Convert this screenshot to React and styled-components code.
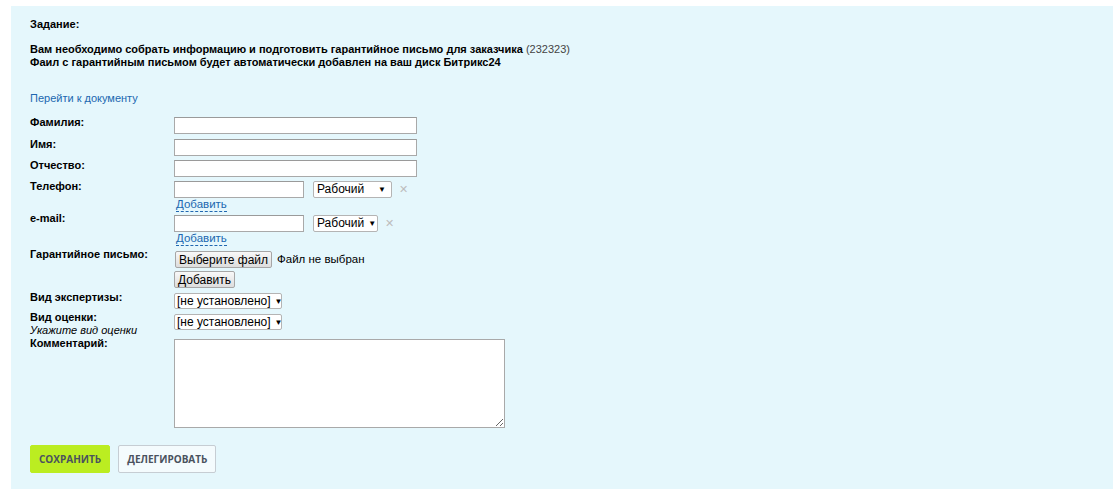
import React from "react";
import styled, { createGlobalStyle } from "styled-components";

const Global = createGlobalStyle`
  body {
    margin: 0;
    padding: 6px 0 0 11px;
    background: #fff;
    font-family: "Liberation Sans", Arial, sans-serif;
  }
`;

const Panel = styled.div`
  background: #e5f7fc;
  padding: 12px 19px 16px;
  font-size: 11px;
  line-height: 13px;
  color: #000;
`;

const Title = styled.div`
  font-weight: bold;
  margin-bottom: 12px;
`;

const Task = styled.div`
  font-weight: bold;
  span {
    font-weight: normal;
    color: #444;
  }
`;

const DocLink = styled.a`
  display: block;
  margin-top: 23px;
  margin-bottom: 11px;
  color: #2067b0;
  text-decoration: none;
`;

const Row = styled.div`
  display: flex;
  align-items: flex-start;
  margin-bottom: ${(p) => p.gap || 0}px;
`;

const Label = styled.div`
  width: 144px;
  flex-shrink: 0;
  font-weight: bold;
  line-height: 13px;
  em {
    display: block;
    font-weight: normal;
    line-height: 12px;
  }
`;

const Field = styled.div`
  display: flex;
  flex-direction: column;
  align-items: flex-start;
  margin-top: ${(p) => p.top || 0}px;
`;

const Line = styled.div`
  display: flex;
  align-items: center;
`;

const Input = styled.input`
  box-sizing: border-box;
  width: ${(p) => p.w}px;
  height: 17px;
  margin: 0;
  padding: 0 3px;
  border: 1px solid #a9a9a9;
  border-top-color: #9a9a9a;
  background: #fff;
  font: 12px "Liberation Sans", Arial, sans-serif;
`;

const Select = styled.div`
  box-sizing: border-box;
  display: inline-flex;
  align-items: center;
  justify-content: space-between;
  white-space: nowrap;
  width: ${(p) => p.w}px;
  height: ${(p) => p.h || 17}px;
  margin-left: ${(p) => p.ml || 0}px;
  padding: 0 5px 0 ${(p) => p.pl || 3}px;
  border: 1px solid #b4b4b4;
  border-radius: 2px;
  background: #fff;
  font-size: 12px;
  line-height: 13px;
  color: #000;
  i {
    font-style: normal;
    font-size: 8px;
    margin-left: 4px;
  }
`;

const Remove = styled.span`
  margin-left: 7px;
  color: #bdbdbd;
  font-size: 11px;
`;

const AddLink = styled.a`
  margin-left: 2px;
  font-size: 11.5px;
  line-height: 12px;
  height: 13px;
  color: #2067b0;
  text-decoration: none;
  border-bottom: 1px dashed #2067b0;
`;

const Btn = styled.button`
  box-sizing: border-box;
  height: 17px;
  margin: ${(p) => p.m || "0"};
  padding: 0 3px;
  border: 1px solid #a6a6a6;
  border-radius: 2px;
  background: linear-gradient(#f8f8f8, #dddddd);
  font: 12px "Liberation Sans", Arial, sans-serif;
  line-height: 14px;
  color: #000;
`;

const FileName = styled.span`
  margin-left: 5px;
  font-size: 11.5px;
`;

const Comment = styled.textarea`
  box-sizing: border-box;
  width: 331px;
  height: 89px;
  margin: 0;
  border: 1px solid #a9a9a9;
  background: #fff;
`;

const Actions = styled.div`
  display: flex;
  gap: 8px;
  margin-top: 17px;
`;

const ActionBtn = styled.button`
  box-sizing: border-box;
  height: 28px;
  padding: 0 8px;
  border: 1px solid ${(p) => (p.primary ? "#bbed21" : "#c6cdd3")};
  border-radius: 2px;
  background: ${(p) => (p.primary ? "#bbed21" : "#f4fbfd")};
  font: bold 10px "Open Sans", sans-serif;
  color: #4a525e;
  text-transform: uppercase;
`;

export default function App() {
  return (
    <>
      <Global />
      <Panel>
        <Title>Задание:</Title>
        <Task>
          Вам необходимо собрать информацию и подготовить гарантийное письмо для заказчика <span>(232323)</span>
          <br />
          Фаил с гарантийным письмом будет автоматически добавлен на ваш диск Битрикс24
        </Task>
        <DocLink href="#">Перейти к документу</DocLink>

        <Row gap={4}>
          <Label>Фамилия:</Label>
          <Field top={1}><Input w={243} /></Field>
        </Row>
        <Row gap={3}>
          <Label>Имя:</Label>
          <Field top={1}><Input w={243} /></Field>
        </Row>
        <Row gap={3}>
          <Label>Отчество:</Label>
          <Field top={1}><Input w={243} /></Field>
        </Row>
        <Row>
          <Label>Телефон:</Label>
          <Field top={1}>
            <Line>
              <Input w={130} />
              <Select w={79} ml={9}>Рабочий<i>▼</i></Select>
              <Remove>✕</Remove>
            </Line>
            <AddLink href="#">Добавить</AddLink>
          </Field>
        </Row>
        <Row gap={2}>
          <Label>e-mail:</Label>
          <Field top={3}>
            <Line>
              <Input w={130} />
              <Select w={65} ml={9}>Рабочий<i>▼</i></Select>
              <Remove>✕</Remove>
            </Line>
            <AddLink href="#">Добавить</AddLink>
          </Field>
        </Row>
        <Row gap={3}>
          <Label>Гарантийное письмо:</Label>
          <Field top={3}>
            <Line>
              <Btn m="0 0 0 1px">Выберите файл</Btn>
              <FileName>Файл не выбран</FileName>
            </Line>
            <Btn m="3px 0 0">Добавить</Btn>
          </Field>
        </Row>
        <Row gap={2}>
          <Label>Вид экспертизы:</Label>
          <Field top={2}>
            <Select w={108} h={16} pl={2}>[не установлено]<i>▼</i></Select>
          </Field>
        </Row>
        <Row gap={1}>
          <Label>
            Вид оценки:
            <em>Укажите вид оценки</em>
          </Label>
          <Field top={3}>
            <Select w={108} h={16} pl={2}>[не установлено]<i>▼</i></Select>
          </Field>
        </Row>
        <Row>
          <Label>Комментарий:</Label>
          <Field top={2}><Comment /></Field>
        </Row>

        <Actions>
          <ActionBtn primary>Сохранить</ActionBtn>
          <ActionBtn>Делегировать</ActionBtn>
        </Actions>
      </Panel>
    </>
  );
}
